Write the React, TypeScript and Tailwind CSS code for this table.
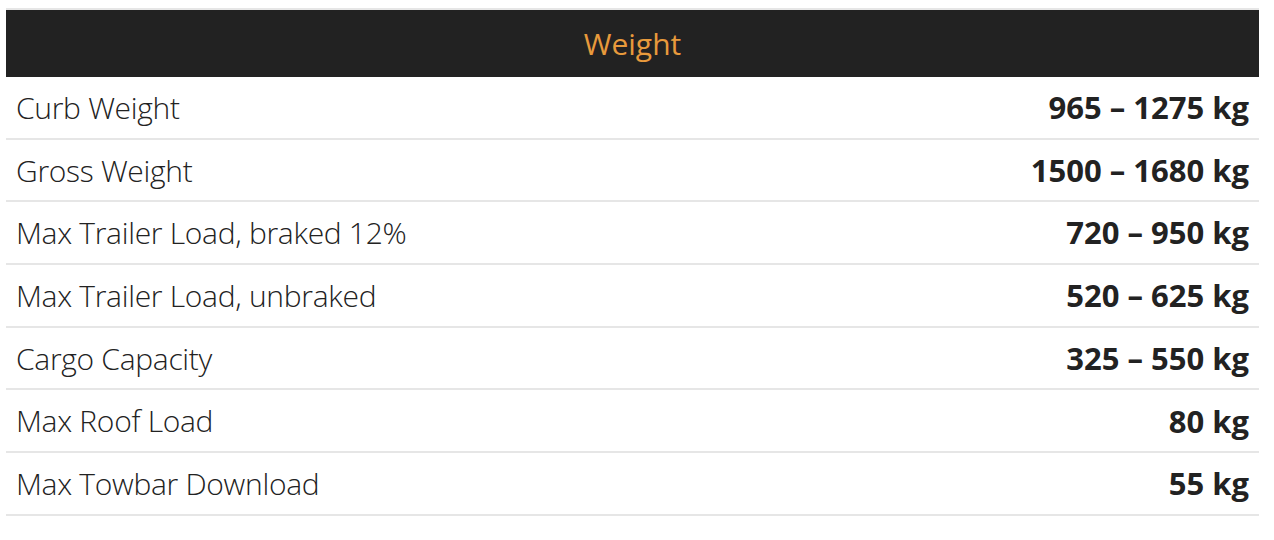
const rows = [
  ['Curb Weight', '965 – 1275 kg'],
  ['Gross Weight', '1500 – 1680 kg'],
  ['Max Trailer Load, braked 12%', '720 – 950 kg'],
  ['Max Trailer Load, unbraked', '520 – 625 kg'],
  ['Cargo Capacity', '325 – 550 kg'],
  ['Max Roof Load', '80 kg'],
  ['Max Towbar Download', '55 kg'],
]

export default function App() {
  return (
    <div className="bg-white min-h-[540px] pt-2 px-[6px] font-['Open_Sans',sans-serif] text-[#222]">
      <div className="w-[1253px] border-t-2 border-[#e6e6e6]">
        <div className="h-[67px] bg-[#222] flex items-center justify-center">
          <h2 className="text-[30px] font-normal text-[#e89a3c] leading-none">Weight</h2>
        </div>
        {rows.map(([label, value]) => (
          <div key={label} className="h-[62.7px] flex items-center justify-between px-[10px] border-b-2 border-[#e6e6e6]">
            <span className="text-[30px] font-light tracking-[-0.3px]">{label}</span>
            <span className="text-[31px] font-bold">{value}</span>
          </div>
        ))}
      </div>
    </div>
  )
}
